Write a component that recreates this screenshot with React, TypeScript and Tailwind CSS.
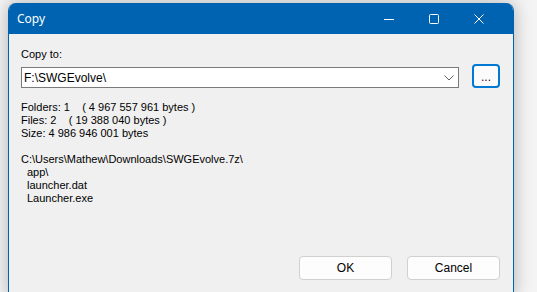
import React from 'react';

const body = { fontFamily: '"Liberation Sans", Arial, sans-serif' };

function CaptionButtons() {
  return (
    <div className="flex h-full items-center pr-[12px]">
      <div className="flex h-full w-[45px] items-center justify-center">
        <svg width="10" height="10" viewBox="0 0 10 10">
          <path d="M0 5.5h10" stroke="#fff" strokeWidth="1" />
        </svg>
      </div>
      <div className="flex h-full w-[45px] items-center justify-center">
        <svg width="10" height="10" viewBox="0 0 10 10">
          <rect x="0.5" y="0.5" width="9" height="9" rx="1" fill="none" stroke="#fff" strokeWidth="1" />
        </svg>
      </div>
      <div className="flex h-full w-[45px] items-center justify-center">
        <svg width="10" height="10" viewBox="0 0 10 10">
          <path d="M0.5 0.5l9 9M9.5 0.5l-9 9" stroke="#fff" strokeWidth="1" />
        </svg>
      </div>
    </div>
  );
}

export default function App() {
  return (
    <div className="h-[292px] w-[537px] overflow-hidden bg-[#f4f4f4] pl-[8px] pt-[3px]">
      <div className="flex h-[296px] w-[506px] flex-col overflow-hidden rounded-[8px] border-x border-b border-[#0063b1] bg-[#f0f0f0] shadow-[0_0_18px_rgba(0,0,0,0.28)]">
        <div className="flex h-[31px] shrink-0 items-center justify-between bg-[#0063b1] pl-[8px]">
          <span className="text-[12px] text-white" style={{ fontFamily: '"Noto Sans", sans-serif' }}>
            Copy
          </span>
          <CaptionButtons />
        </div>

        <div className="flex flex-col px-[12px] text-[11px] text-black" style={body}>
          <div className="mt-[13px] h-[15px] leading-[15px]">Copy to:</div>

          <div className="mt-[2px] flex items-end gap-[13px]">
            <div className="flex h-[21px] flex-1 items-center justify-between border border-[#7a7a7a] bg-white pl-[2px] pr-[4px] text-[12px]">
              <span>F:\SWGEvolve\</span>
              <svg width="10" height="6" viewBox="0 0 10 6">
                <path d="M0.5 0.5l4.5 4.5 4.5-4.5" fill="none" stroke="#606060" strokeWidth="1" />
              </svg>
            </div>
            <div className="mr-[1px] flex h-[24px] w-[28px] items-center justify-center rounded-[4px] border-2 border-[#0078d4] bg-[#fbfbfb] pt-[1px] text-[12px] text-[#400020]">
              ...
            </div>
          </div>

          <div className="mt-[13px] whitespace-pre leading-[13px]">
            <div>{'Folders: 1    ( 4 967 557 961 bytes )'}</div>
            <div>{'Files: 2    ( 19 388 040 bytes )'}</div>
            <div>Size: 4 986 946 001 bytes</div>
            <div className="h-[13px]"></div>
            <div>C:\Users\Mathew\Downloads\SWGEvolve.7z\</div>
            <div className="pl-[6px]">app\</div>
            <div className="pl-[6px]">launcher.dat</div>
            <div className="pl-[6px]">Launcher.exe</div>
          </div>

          <div className="mt-[51px] flex justify-end gap-[15px]">
            <button className="h-[24px] w-[93px] rounded-[4px] border border-[#d0d0d0] bg-[#fdfdfd] text-[12px]">
              OK
            </button>
            <button className="mr-[1px] h-[24px] w-[93px] rounded-[4px] border border-[#d0d0d0] bg-[#fdfdfd] text-[12px]">
              Cancel
            </button>
          </div>
        </div>
      </div>
    </div>
  );
}
